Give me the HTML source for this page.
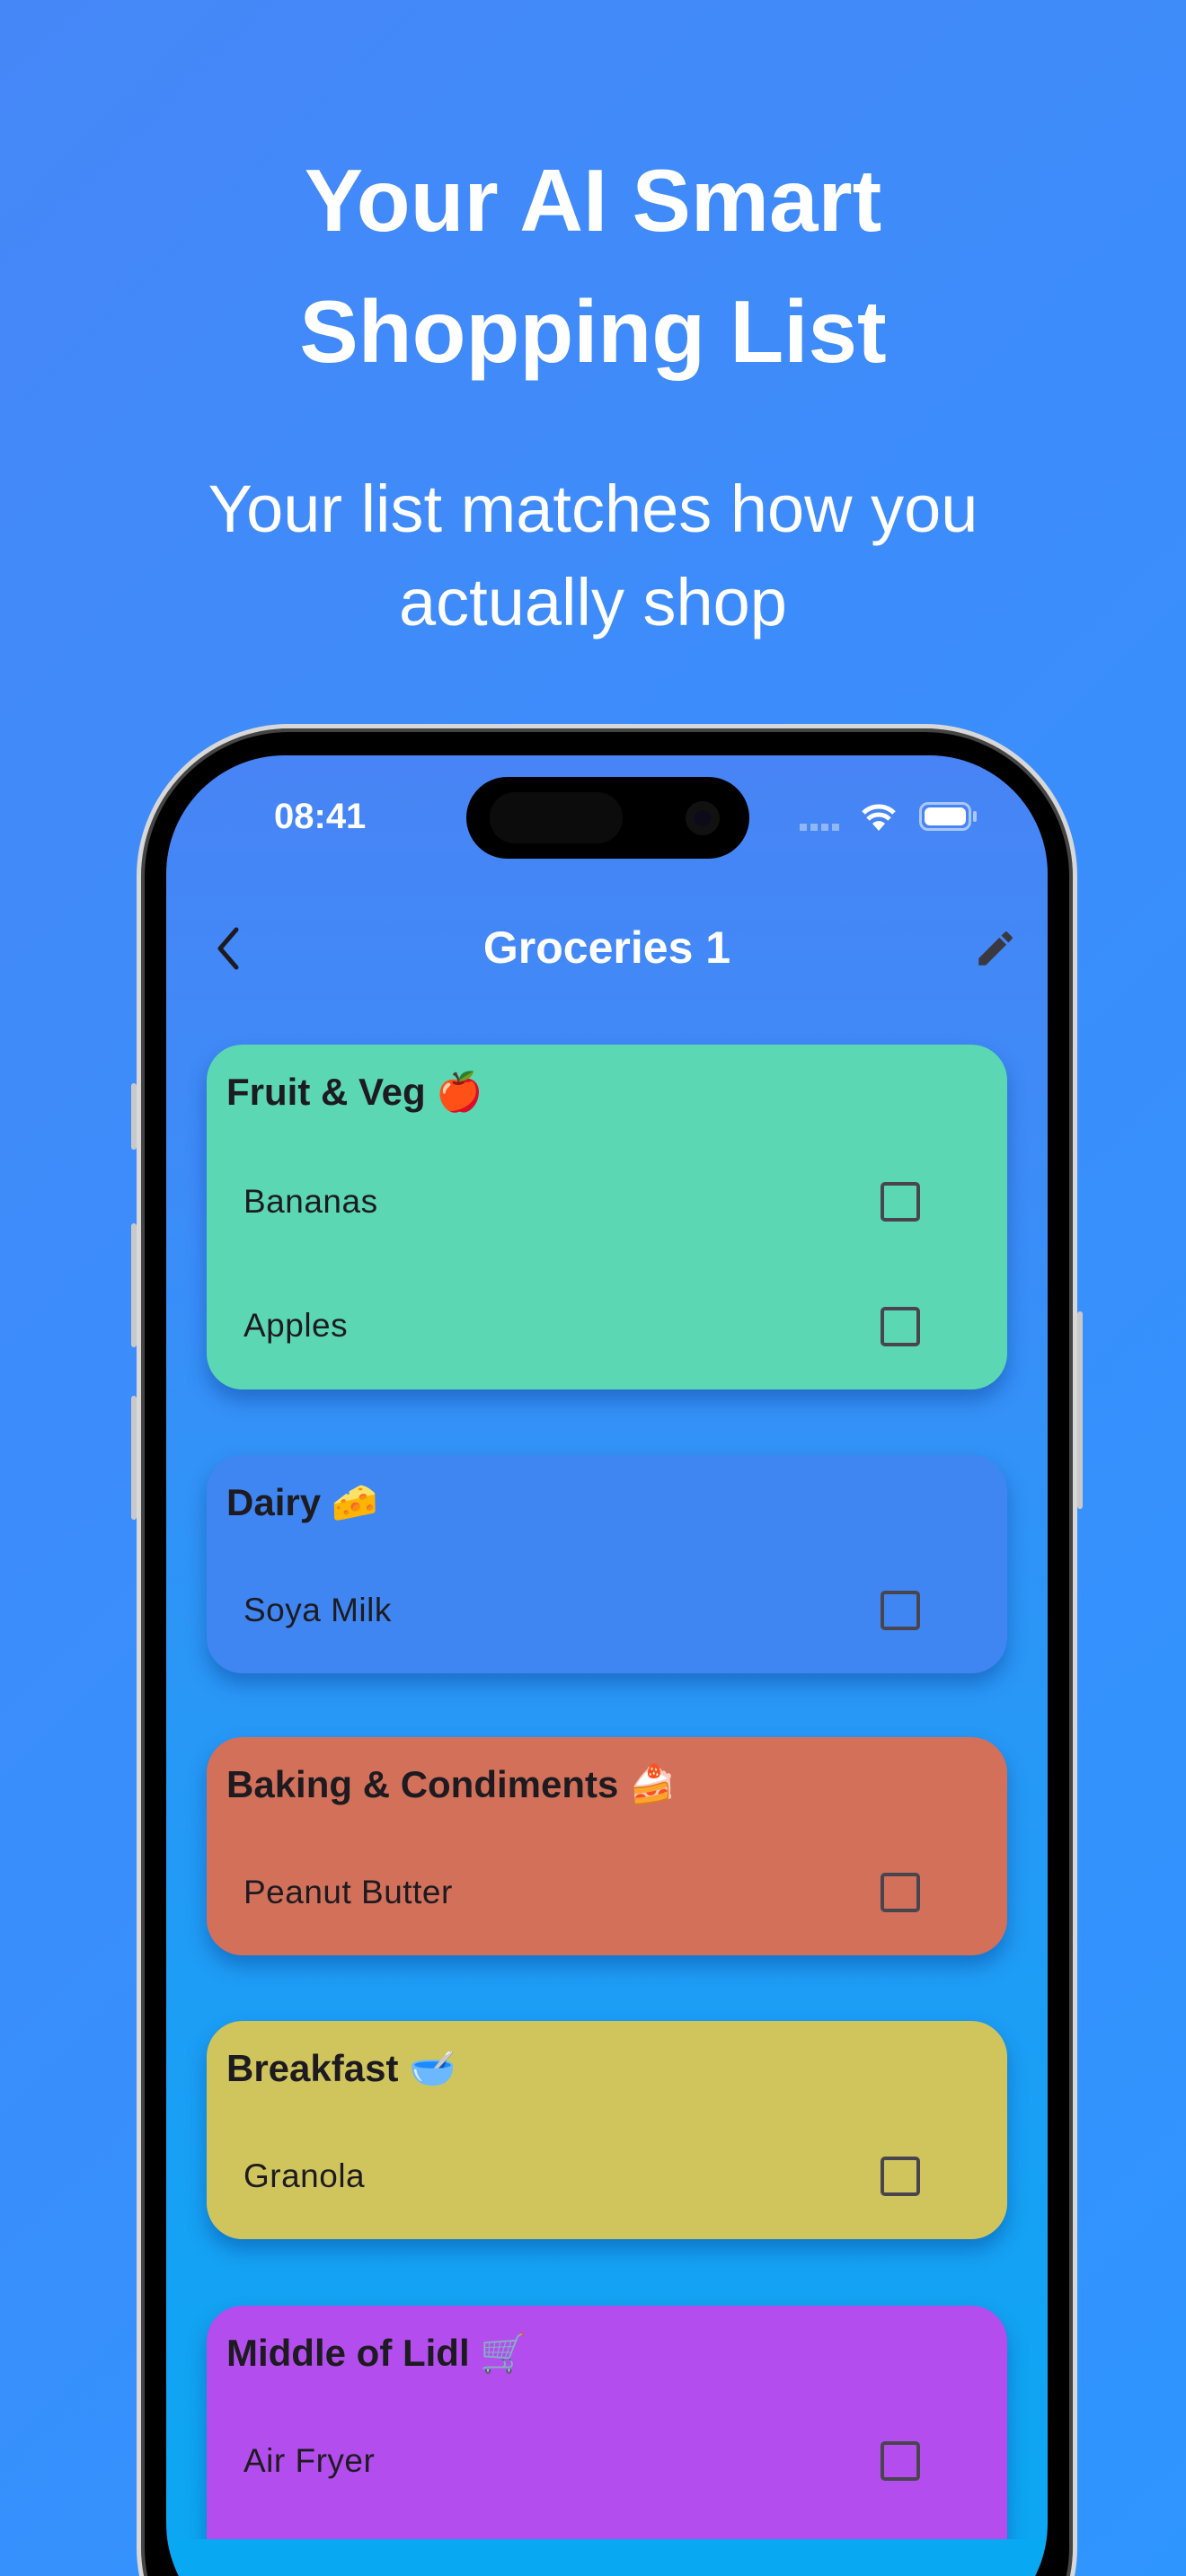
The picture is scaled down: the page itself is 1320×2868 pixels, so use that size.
<!DOCTYPE html>
<html><head><meta charset="utf-8"><style>
*{margin:0;padding:0;box-sizing:border-box}
html,body{width:1320px;height:2868px;overflow:hidden;background:#3a8efc}
#root{position:absolute;left:0;top:0;width:1320px;height:2868px;overflow:hidden;background:linear-gradient(135deg,#4687f8 0%,#3a8efc 50%,#2f95fe 100%);font-family:"Liberation Sans","DejaVu Sans",sans-serif}
.a{position:absolute}
.h1{left:0;width:1320px;text-align:center;color:#fff;font-weight:bold;font-size:98px;line-height:146px}
.sub{left:0;width:1320px;text-align:center;color:#fff;font-size:74px;line-height:104px}
.frame{left:152px;top:806px;width:1047px;height:2200px;border-radius:170px;background:#000;border:5px solid #d8d8d8;box-shadow:inset 0 0 0 4px #444}
.screen{left:185px;top:841px;width:981px;height:2100px;border-radius:132px;background:linear-gradient(180deg,#4884f5 0%,#3b8df8 25%,#1a9ff5 70%,#09a8f2 100%);overflow:hidden}
.card{position:absolute;left:45px;width:891px;border-radius:40px;box-shadow:0 12px 22px rgba(0,40,120,.35)}
.ct{position:absolute;left:22px;font-weight:bold;font-size:42px;color:#1d1b20;line-height:50px}
.it{position:absolute;left:41px;font-size:37px;color:#1d1b20;line-height:46px;letter-spacing:.5px}
.cb{position:absolute;left:750px;width:44px;height:44px;border:4px solid #49454f;border-radius:5px}
.btn{background:#c9c9c9;width:6px;border-radius:3px}
</style></head><body><div id="root">
<div class="a h1" style="top:150px">Your AI Smart</div>
<div class="a h1" style="top:296px">Shopping List</div>
<div class="a sub" style="top:515px">Your list matches how you</div>
<div class="a sub" style="top:619px">actually shop</div>

<div class="a btn" style="left:146px;top:1206px;height:74px"></div>
<div class="a btn" style="left:146px;top:1362px;height:138px"></div>
<div class="a btn" style="left:146px;top:1554px;height:138px"></div>
<div class="a btn" style="left:1199px;top:1460px;height:220px"></div>
<div class="a frame"></div>
<div class="a screen">
  <div class="a" style="left:120px;top:44px;color:#fff;font-size:40px;font-weight:bold;line-height:48px">08:41</div>
  <div class="a" style="left:334px;top:24px;width:315px;height:91px;background:#000;border-radius:46px"></div>
  <div class="a" style="left:360px;top:41px;width:148px;height:57px;background:#0c0c0c;border-radius:28px"></div>
  <div class="a" style="left:578px;top:51px;width:38px;height:38px;background:#0b0b1a;border-radius:50%;box-shadow:inset 0 0 0 10px #111"></div>
  <div class="a" style="left:705px;top:76px;width:44px;height:8px;background:repeating-linear-gradient(90deg,#8fb6f5 0 8px,transparent 8px 12px)"></div>
  <svg class="a" style="left:773px;top:50px" width="40" height="36" viewBox="0 0 40 36"><path d="M20 34 L13 26 A10 10 0 0 1 27 26Z" fill="#fff"/><path d="M8 21 A17 17 0 0 1 32 21" stroke="#fff" stroke-width="5" fill="none"/><path d="M3 14 A24 24 0 0 1 37 14" stroke="#fff" stroke-width="5" fill="none"/></svg>
  <div class="a" style="left:838px;top:52px;width:58px;height:32px;border:3px solid #a9c8f8;border-radius:10px;padding:3px"><div style="width:100%;height:100%;background:#fff;border-radius:6px"></div></div>
  <div class="a" style="left:898px;top:62px;width:4px;height:12px;background:#a9c8f8;border-radius:2px"></div>
  <svg class="a" style="left:52px;top:190px" width="32" height="50" viewBox="0 0 32 50"><path d="M26 4 L8 25 L26 46" stroke="#1d1b20" stroke-width="5" fill="none" stroke-linecap="round" stroke-linejoin="round"/></svg>
  <div class="a" style="left:0;width:981px;top:184px;text-align:center;color:#fff;font-weight:bold;font-size:50px;line-height:60px">Groceries 1</div>
  <svg class="a" style="left:898px;top:190px" width="50" height="50" viewBox="0 0 24 24"><path d="M3 17.25V21h3.75L17.810 9.94l-3.75-3.75L3 17.25zM20.71 7.04a1 1 0 0 0 0-1.41l-2.34-2.34a1 1 0 0 0-1.41 0l-1.83 1.83 3.75 3.75 1.830-1.83z" fill="#3a3840"/></svg>

  <div class="card" style="top:322px;height:384px;background:#5bd7b3">
    <div class="ct" style="top:28px">Fruit &amp; Veg 🍎</div>
    <div class="it" style="top:152px">Bananas</div><div class="cb" style="top:153px"></div>
    <div class="it" style="top:290px">Apples</div><div class="cb" style="top:292px"></div>
  </div>
  <div class="card" style="top:779px;height:243px;background:#3f86f3">
    <div class="ct" style="top:28px">Dairy 🧀</div>
    <div class="it" style="top:150px">Soya Milk</div><div class="cb" style="top:151px"></div>
  </div>
  <div class="card" style="top:1093px;height:243px;background:#d3705a">
    <div class="ct" style="top:28px">Baking &amp; Condiments 🍰</div>
    <div class="it" style="top:150px">Peanut Butter</div><div class="cb" style="top:151px"></div>
  </div>
  <div class="card" style="top:1409px;height:243px;background:#d0c55c">
    <div class="ct" style="top:28px">Breakfast 🥣</div>
    <div class="it" style="top:150px">Granola</div><div class="cb" style="top:151px"></div>
  </div>
  <div class="card" style="top:1726px;height:300px;background:#b44dee;border-radius:40px 40px 0 0">
    <div class="ct" style="top:28px">Middle of Lidl 🛒</div>
    <div class="it" style="top:150px">Air Fryer</div><div class="cb" style="top:151px"></div>
  </div>
  <div class="a" style="left:0;top:1986px;width:981px;height:120px;background:#09a8f2"></div>
</div>
</div></body></html>
